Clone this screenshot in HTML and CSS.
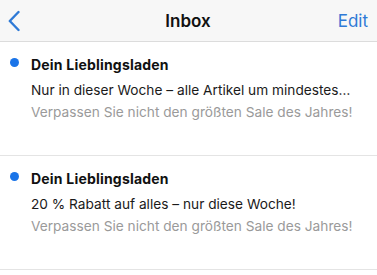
FILE: index.html
```
<!DOCTYPE html>
<html>
<head>
<meta charset="utf-8">
<link rel="stylesheet" href="styles.css">
</head>
<body>
<header class="nav">
  <svg class="back" width="12" height="22" viewBox="0 0 12 22"><path d="M10.5 2 L1.8 11 L10.5 20" fill="none" stroke="#2f7ad6" stroke-width="2.4" stroke-linecap="round" stroke-linejoin="round"/></svg>
  <h1 class="title">Inbox</h1>
  <span class="edit">Edit</span>
</header>
<ul class="list">
  <li class="mail">
    <span class="dot"></span>
    <div class="body">
      <div class="sender">Dein Lieblingsladen</div>
      <div class="subject">Nur in dieser Woche – alle Artikel um mindestes…</div>
      <div class="preview">Verpassen Sie nicht den größten Sale des Jahres!</div>
    </div>
  </li>
  <li class="mail">
    <span class="dot"></span>
    <div class="body">
      <div class="sender">Dein Lieblingsladen</div>
      <div class="subject">20 % Rabatt auf alles – nur diese Woche!</div>
      <div class="preview">Verpassen Sie nicht den größten Sale des Jahres!</div>
    </div>
  </li>
</ul>
</body>
</html>
```
FILE: styles.css
```
* { box-sizing: border-box; }
body {
  margin: 0;
  background: #fff;
  font-family: Inter, "Noto Sans", sans-serif;
  color: #111;
}
.nav {
  height: 42px;
  background: #f7f7f7;
  border-bottom: 1px solid #dcdcdc;
  display: grid;
  grid-template-columns: 1fr auto 1fr;
  align-items: center;
  padding: 0 9px 0 8px;
}
.back { display: block; }
.title {
  margin: 0;
  font-size: 17px;
  font-weight: 600;
  color: #111;
}
.edit {
  justify-self: end;
  font-size: 17px;
  color: #2f7ad6;
}
.list { list-style: none; margin: 0; padding: 0; }
.mail {
  display: flex;
  align-items: flex-start;
  height: 114px;
  border-bottom: 1px solid #e4e4e4;
  padding: 14px 0 0 10px;
}
.dot {
  width: 9px;
  height: 9px;
  border-radius: 50%;
  background: #1a74e8;
  margin-top: 2px;
  flex: none;
}
.body { margin-left: 12px; }
.sender { font-size: 14px; font-weight: 700; line-height: 18px; letter-spacing: 0.2px; }
.subject { font-size: 13.7px; line-height: 22px; margin-top: 5px; color: #1a1a1a; }
.preview { font-size: 13.7px; line-height: 22px; color: #9a9a9a; }
```
